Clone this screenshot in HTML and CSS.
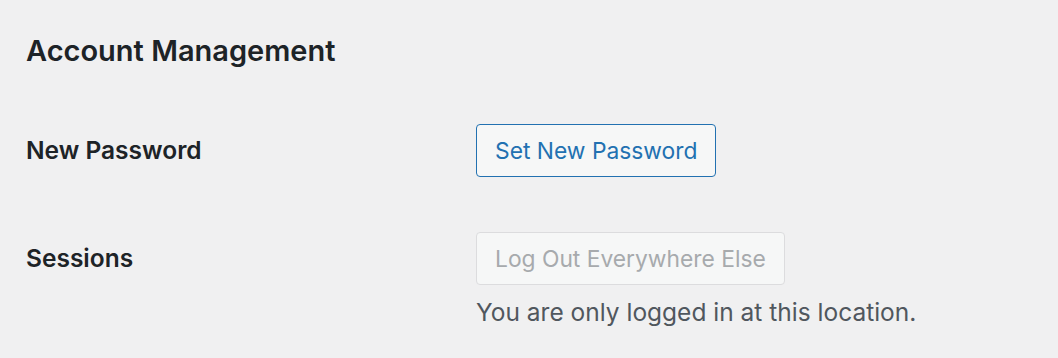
FILE: index.html
```html
<!DOCTYPE html>
<html lang="en">
  <head>
    <meta charset="UTF-8" />
    <title>Account Management</title>
    <link rel="stylesheet" href="styles.css">
  </head>
  <body>
    <div class="wrap">
      <h2 class="title">Account Management</h2>

      <div class="form-row">
        <div class="label">New Password</div>
        <div class="field">
          <button type="button" class="button">Set New Password</button>
        </div>
      </div>

      <div class="form-row sessions">
        <div class="label">Sessions</div>
        <div class="field">
          <button type="button" class="button" disabled>Log Out Everywhere Else</button>
          <p class="description">You are only logged in at this location.</p>
        </div>
      </div>
    </div>
  </body>
</html>
```

FILE: styles.css
```css
* {
  margin: 0;
  padding: 0;
  box-sizing: border-box;
}

body {
  background: #f0f0f1;
  color: #1d2327;
  font-family: Inter, "Noto Sans", sans-serif;
}

.wrap {
  padding: 33px 0 0 26px;
}

.title {
  font-size: 29px;
  font-weight: 600;
  line-height: 36px;
  margin-bottom: 55px;
}

.form-row {
  display: grid;
  grid-template-columns: 450px 1fr;
  align-items: start;
}

.form-row .label {
  font-size: 24.5px;
  font-weight: 600;
  line-height: 53px;
}

.form-row.sessions {
  margin-top: 55px;
}

.button {
  font-family: inherit;
  font-size: 22.8px;
  line-height: 51px;
  height: 53px;
  padding: 0 18px;
  color: #2271b1;
  background: #f6f7f7;
  border: 1px solid #2271b1;
  border-radius: 4px;
  cursor: pointer;
}

.button:disabled {
  color: #a7aaad;
  border-color: #dcdcde;
  cursor: default;
}

.description {
  font-size: 24.5px;
  line-height: 30px;
  color: #50575e;
  margin-top: 12px;
}
```
